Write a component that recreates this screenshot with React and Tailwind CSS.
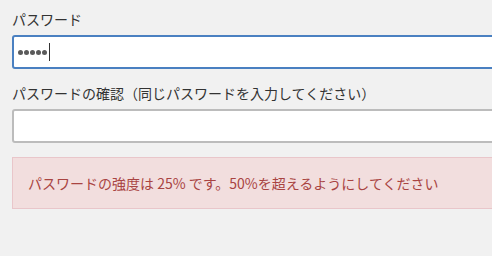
export default function App() {
  return (
    <div className="w-[492px] h-[256px] overflow-hidden bg-[#f1f1f1] text-[#333] font-['Noto_Sans_CJK_JP','Noto_Sans',sans-serif]">
      <div className="w-[520px] pl-3 pt-[9px]">
        <label className="block text-[14px] leading-[20px]">パスワード</label>
        <div className="mt-[6px] h-[34px] rounded-[3px] border-2 border-[#4a80c1] bg-white flex items-center pl-[4px] gap-[1px]">
          {[0, 1, 2, 3, 4].map((i) => (
            <span key={i} className="w-[5px] h-[5px] rounded-full bg-[#5a5a5a]" />
          ))}
          <span className="ml-[1px] w-px h-[18px] bg-[#333]" />
        </div>
        <label className="mt-[14px] block text-[14px] leading-[20px]">パスワードの確認（同じパスワードを入力してください）</label>
        <div className="mt-[6px] h-[34px] rounded-[3px] border-2 border-[#bcbcbc] bg-white" />
        <div className="mt-[14px] h-[52px] border border-[#e9c6ca] bg-[#f2dede] text-[#a94442] text-[14px] flex items-center pl-[15px]">
          パスワードの強度は 25% です。50%を超えるようにしてください
        </div>
      </div>
    </div>
  );
}
